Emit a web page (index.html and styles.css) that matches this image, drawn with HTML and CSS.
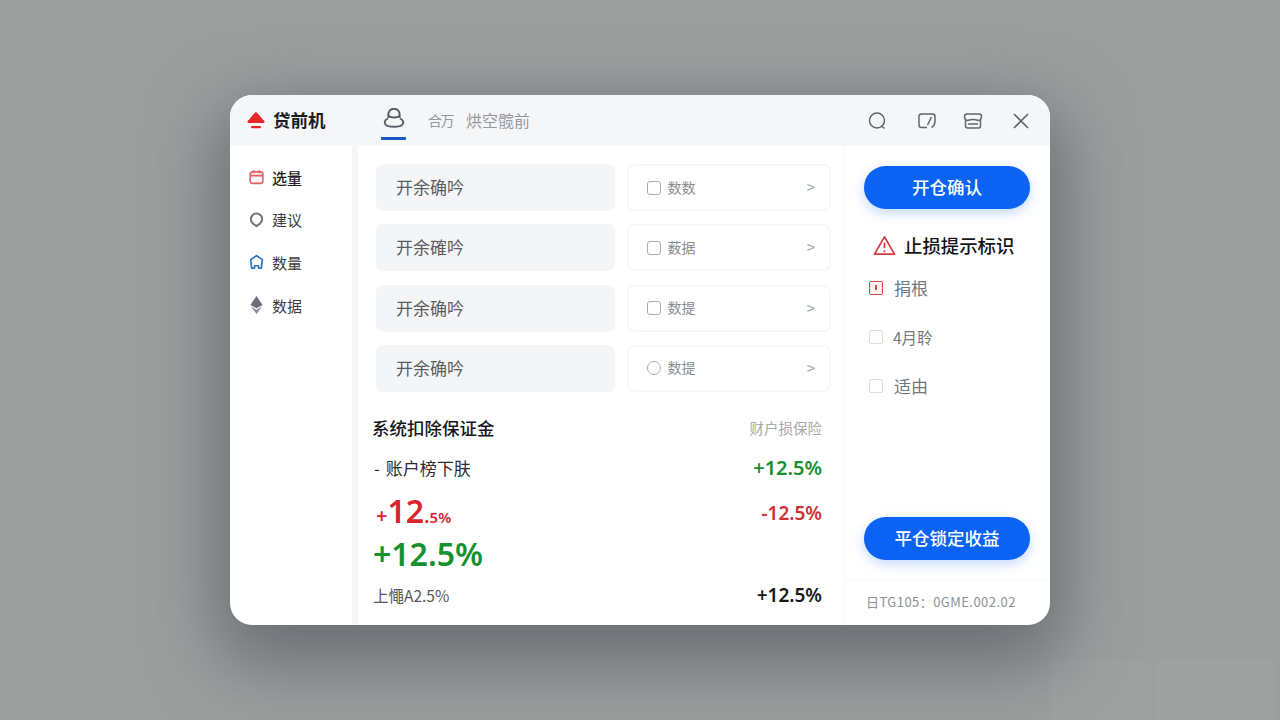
FILE: index.html
```html
<!DOCTYPE html>
<html lang="zh-CN">
<head>
  <meta charset="UTF-8" />
  <title>贷前机</title>
  <link rel="stylesheet" href="styles.css">
</head>
<body>

<div class="ghost ghost-a"></div>
<div class="ghost ghost-b"></div>

<div class="window">
  <!-- Title bar -->
  <header class="titlebar">
    <div class="brand">
      <svg class="brand-icon" viewBox="0 0 18 18">
        <path d="M0.5 10 C3 8.5 5 4 9 1 C13 4 15 8.5 17.5 10 Q18 12 16 12 L2 12 Q0 12 0.5 10 Z" fill="#e8262a"/>
        <rect x="4" y="15" width="10" height="2.2" rx="1" fill="#e8262a"/>
      </svg>
      <span>贷前机</span>
    </div>
    <nav class="tabs">
      <a class="tab tab-active">
        <svg class="tab-icon" viewBox="0 0 22 20" fill="none" stroke="#565a62" stroke-width="1.9">
          <path d="M5.5 10 C4.5 3 7.5 0.8 11 0.8 C14.5 0.8 17.5 3 16.5 10"/>
          <path d="M5.5 8 C8 10 14 10 16.5 8"/>
          <path d="M5 10.5 C1.5 12 1 14.5 2.5 16.5 C5 19.5 17 19.5 19.5 16.5 C21 14.5 20.5 12 17 10.5"/>
        </svg>
      </a>
      <a class="tab tab-short">合万</a>
      <a class="tab">烘空髋前</a>
    </nav>
    <div class="tools">
      <svg class="tool" viewBox="0 0 20 20" fill="none" stroke="#62666d" stroke-width="1.5">
        <circle cx="10" cy="9.5" r="7.5"/><path d="M14.5 15 L17.5 17.5"/>
      </svg>
      <svg class="tool tool-note" viewBox="0 0 20 20" fill="none" stroke="#62666d" stroke-width="1.5">
        <path d="M10 16.5 L4.5 16.5 Q2 16.5 2 14 L2 5.5 Q2 3 4.5 3 L15.5 3 Q18 3 18 5.5 L18 11 Q17.5 15 14.5 16.5 M10.5 14 L14.5 6"/>
      </svg>
      <svg class="tool" viewBox="0 0 20 20" fill="none" stroke="#62666d" stroke-width="1.5">
        <path d="M4 3 L16 3 Q18.5 3 18.5 5.5 Q18.5 9 15.5 9.5 Q10 7.5 4.5 9.5 Q1.5 9 1.5 5.5 Q1.5 3 4 3 Z"/>
        <path d="M2.5 9 L2.5 15 Q2.5 17 4.5 17 L15.5 17 Q17.5 17 17.5 15 L17.5 9 M5 13 L15 13"/>
      </svg>
      <svg class="tool" viewBox="0 0 20 20" fill="none" stroke="#62666d" stroke-width="1.6">
        <path d="M3 3 L17 17 M17 3 L3 17"/>
      </svg>
    </div>
  </header>

  <div class="content">
    <!-- Sidebar -->
    <aside class="sidebar">
      <div class="side-item">
        <svg class="side-icon" viewBox="0 0 16 16" fill="#fdf1f1" stroke="#e0606a" stroke-width="1.7">
          <rect x="1.2" y="2.5" width="13.6" height="12.3" rx="2.5"/><path d="M1.5 6.5 L14.5 6.5 M5 0.8 L5 4 M11 0.8 L11 4" fill="none"/>
        </svg>
        <span class="strong">选量</span>
      </div>
      <div class="side-item">
        <svg class="side-icon" viewBox="0 0 16 16" fill="none" stroke="#77797d" stroke-width="2.3">
          <path d="M8 14.6 L4 11.5 A6 6 0 1 1 12 11.5 Z" stroke-linejoin="round"/>
        </svg>
        <span>建议</span>
      </div>
      <div class="side-item">
        <svg class="side-icon" viewBox="0 0 16 16" fill="none" stroke="#2a74c4" stroke-width="1.8">
          <path d="M8 1.2 L14.2 5.5 L13.2 14.5 L10.2 14.5 L10 12 L6 12 L5.8 14.5 L2.8 14.5 L1.8 5.5 Z" stroke-linejoin="round"/>
        </svg>
        <span>数量</span>
      </div>
      <div class="side-item">
        <svg class="side-icon side-icon-tall" viewBox="0 0 16 20">
          <path d="M8 0.5 L14.5 10 L8 13.5 L1.5 10 Z" fill="#6c6f76"/>
          <path d="M2 11.5 L8 15 L14 11.5 L8 19.5 Z" fill="#8b8e94"/>
        </svg>
        <span>数据</span>
      </div>
    </aside>

    <!-- Main column -->
    <main class="main">
      <div class="form-row">
        <div class="field">开余确吟</div>
        <div class="picker"><span class="box"></span><span class="picker-text">数数</span><span class="chevron">&gt;</span></div>
      </div>
      <div class="form-row">
        <div class="field">开余確吟</div>
        <div class="picker"><span class="box"></span><span class="picker-text">薮据</span><span class="chevron">&gt;</span></div>
      </div>
      <div class="form-row">
        <div class="field">开余确吟</div>
        <div class="picker"><span class="box"></span><span class="picker-text">数提</span><span class="chevron">&gt;</span></div>
      </div>
      <div class="form-row">
        <div class="field">开余确吟</div>
        <div class="picker"><span class="box box-round"></span><span class="picker-text">数提</span><span class="chevron">&gt;</span></div>
      </div>

      <section class="summary">
        <div class="line line-title">
          <span class="summary-title">系统扣除保证金</span>
          <span class="summary-note">财户损保险</span>
        </div>
        <div class="line line-account">
          <span class="account">- 账户榜下肤</span>
          <span class="pct-green">+12.5%</span>
        </div>
        <div class="line line-red">
          <span class="big-red">+<b>12</b>.<small>5%</small></span>
          <span class="pct-red">-12.5%</span>
        </div>
        <div class="line line-green">
          <span class="big-green">+12.5%</span>
        </div>
        <div class="line line-last">
          <span class="last-left">上憴A2.5%</span>
          <span class="pct-dark">+12.5%</span>
        </div>
      </section>
    </main>

    <!-- Right panel -->
    <aside class="panel">
      <div class="panel-top">
        <button class="primary">开仓确认</button>
        <div class="warn">
          <svg class="warn-icon" viewBox="0 0 24 22" fill="none" stroke="#d8383e" stroke-width="1.8">
            <path d="M12 2 L22.5 20 L1.5 20 Z" stroke-linejoin="round"/>
            <path d="M12 8 L12 14 M12 16 L12 18"/>
          </svg>
          <span>止损提示标识</span>
        </div>
        <div class="check-row">
          <span class="check check-on"></span><span>捐根</span>
        </div>
        <div class="check-row">
          <span class="check"></span><span class="thin">4月聆</span>
        </div>
        <div class="check-row">
          <span class="check"></span><span>适由</span>
        </div>
      </div>
      <div class="panel-bottom">
        <button class="primary">平仓锁定收益</button>
      </div>
      <div class="panel-foot">日TG105：0GME.002.02</div>
    </aside>
  </div>
</div>

</body>
</html>
```

FILE: styles.css
```css
:root {
  --blue: #0a63f2;
  --head-bg: #f5f6f8;
  --text: #26282c;
  --muted: #85888e;
  --green: #17902f;
  --red: #d9262c;
  --num: "Noto Sans", "Noto Sans CJK SC", sans-serif;
}

html, body {
  height: 100%;
}

body {
  margin: 0;
  display: flex;
  align-items: center;
  justify-content: center;
  overflow: hidden;
  background-color: #9d9f9f;
  font-family: "Noto Sans CJK SC", "Noto Sans", sans-serif;
  color: var(--text);
}

.ghost {
  position: absolute;
  top: 660px;
  height: 60px;
  background-color: rgba(255, 255, 255, 0.025);
}

.ghost-a {
  left: 1050px;
  width: 100px;
}

.ghost-b {
  left: 1155px;
  width: 120px;
}

.window {
  width: 820px;
  height: 530px;
  display: flex;
  flex-direction: column;
  background-color: #fff;
  border-radius: 22px;
  overflow: hidden;
  box-shadow: 0 26px 70px 14px rgba(62, 66, 76, 0.52);
}

/* Title bar */
.titlebar {
  height: 51px;
  flex-shrink: 0;
  display: flex;
  align-items: center;
  background-color: var(--head-bg);
}

.brand {
  width: 151px;
  padding: 0 0 2px 17px;
  box-sizing: border-box;
  display: flex;
  align-items: center;
  gap: 8px;
  font-size: 17.5px;
  font-weight: 700;
  color: #1b1c1f;
}

.brand-icon {
  width: 18px;
  height: 18px;
}

.tabs {
  display: flex;
  align-items: center;
  height: 100%;
  font-size: 16px;
  color: #95989e;
}

.tab {
  display: flex;
  align-items: center;
  padding-bottom: 2px;
}

.tab-active {
  align-self: flex-start;
  width: 25px;
  height: 32px;
  margin-top: 13px;
  margin-right: 22px;
  padding-bottom: 8px;
  box-sizing: border-box;
  justify-content: center;
  align-items: flex-start;
  border-bottom: 3px solid #1a56c4;
  border-radius: 1px;
}

.tab-short {
  font-size: 14px;
  letter-spacing: -1.5px;
  margin-right: 13px;
}

.tab-icon {
  width: 22px;
  height: 20px;
}

.tools {
  margin-left: auto;
  margin-right: 19px;
  display: flex;
  gap: 28px;
}

.tool {
  width: 20px;
  height: 20px;
}

.tool-note {
  margin: 0 -2px 0 2px;
}

.content {
  flex: 1;
  display: flex;
  min-height: 0;
}

/* Sidebar */
.sidebar {
  width: 128px;
  flex-shrink: 0;
  padding: 10px 0 0 19px;
  box-sizing: border-box;
  border-right: 6px solid var(--head-bg);
}

.side-item {
  height: 42.6px;
  display: flex;
  align-items: center;
  gap: 8px;
  font-size: 15px;
  color: #3c3e42;
}

.side-icon {
  width: 15px;
  height: 16px;
  flex-shrink: 0;
}

.side-icon-tall {
  height: 20px;
}

.strong {
  color: #1c1d20;
  font-weight: 500;
}

/* Main column */
.main {
  width: 487px;
  flex-shrink: 0;
  padding: 18px 13px 0 18px;
  box-sizing: border-box;
  border-right: 1px solid #f6f7f8;
}

.form-row {
  display: flex;
  gap: 12px;
  height: 47px;
  margin-bottom: 13.3px;
}

.field {
  width: 240px;
  display: flex;
  align-items: center;
  padding: 0 0 2px 20px;
  box-sizing: border-box;
  background-color: #f4f5f7;
  border-radius: 7px;
  font-size: 17px;
  color: #5a5d62;
}

.picker {
  width: 204px;
  display: flex;
  align-items: center;
  padding: 0 14px 2px 18px;
  box-sizing: border-box;
  background-color: #fff;
  border: 2px solid #f6f7f8;
  border-radius: 7px;
  font-size: 14px;
  color: #8a8d92;
}

.box {
  width: 12px;
  height: 12px;
  border: 1px solid #a9abb0;
  border-radius: 3px;
  margin: 2px 6px 0 0;
}

.box-round {
  border-radius: 50%;
}

.picker-text {
  flex: 1;
}

.chevron {
  font-size: 15px;
  color: #a3a5aa;
}

/* Summary block */
.summary {
  margin: 15.3px 9px 0 -4px;
}

.line {
  display: flex;
  justify-content: space-between;
  align-items: center;
}

.line-title {
  height: 40px;
}

.line-account {
  height: 41px;
}

.line-red {
  height: 44px;
}

.line-green {
  height: 42px;
}

.line-last {
  height: 41px;
}

.summary-title {
  font-size: 17.5px;
  font-weight: 500;
  color: #15161a;
}

.summary-note {
  font-size: 14.5px;
  color: #a6a8ab;
}

.account {
  padding-left: 2px;
  font-size: 17px;
  word-spacing: 2px;
  color: #2b2d31;
}

.pct-green {
  font-family: var(--num);
  font-size: 20px;
  font-weight: 600;
  color: var(--green);
}

.pct-red {
  padding-top: 6px;
  font-family: var(--num);
  font-size: 19px;
  font-weight: 600;
  color: #cf3036;
}

.pct-dark {
  font-family: var(--num);
  font-size: 19px;
  font-weight: 600;
  color: #17181b;
}

.big-red {
  padding-left: 4px;
  font-family: var(--num);
  font-size: 20px;
  font-weight: 600;
  color: var(--red);
}

.big-red b {
  font-size: 32px;
  font-weight: 600;
}

.big-red small {
  font-size: 15px;
}

.big-green {
  padding-left: 1px;
  font-family: var(--num);
  font-size: 32px;
  font-weight: 600;
  color: var(--green);
}

.last-left {
  padding-left: 1px;
  font-size: 15.5px;
  color: #55585d;
}

/* Right panel */
.panel {
  flex: 1;
  display: flex;
  flex-direction: column;
  min-width: 0;
}

.panel-top {
  flex: 1;
  padding: 20px 20px 0 19px;
}

.primary {
  display: block;
  width: 166px;
  height: 43px;
  padding: 0 0 2px;
  border: none;
  border-radius: 22px;
  background-color: var(--blue);
  color: #fff;
  font-family: inherit;
  font-size: 17.5px;
  font-weight: 500;
  box-shadow: 0 4px 12px rgba(10, 99, 242, 0.25);
}

.warn {
  display: flex;
  align-items: center;
  gap: 8px;
  margin: 23px 0 5px 9px;
  font-size: 18.4px;
  font-weight: 500;
  color: #131417;
}

.warn-icon {
  width: 23px;
  height: 21px;
}

.check-row {
  display: flex;
  align-items: center;
  gap: 11px;
  height: 49px;
  margin-left: 5px;
  font-size: 17px;
  color: #74777c;
}

.check {
  width: 12px;
  height: 12px;
  border: 1.5px solid #dcdde0;
  border-radius: 2px;
  flex-shrink: 0;
}

.check-on {
  position: relative;
  border-color: #d8434a;
  background-color: #fdf4f4;
}

.check-on::after {
  content: "";
  position: absolute;
  left: 5px;
  top: 3px;
  width: 2px;
  height: 5px;
  background-color: #d8434a;
}

.thin {
  margin-left: -1px;
  font-size: 15.5px;
}

.panel-bottom {
  height: 62px;
  padding-left: 19px;
}

.panel-foot {
  height: 46px;
  display: flex;
  align-items: center;
  padding: 0 0 3px 21px;
  box-sizing: border-box;
  border-top: 1px solid #f6f7f8;
  font-size: 13px;
  letter-spacing: 0.45px;
  color: #8e9095;
  white-space: nowrap;
}
```
